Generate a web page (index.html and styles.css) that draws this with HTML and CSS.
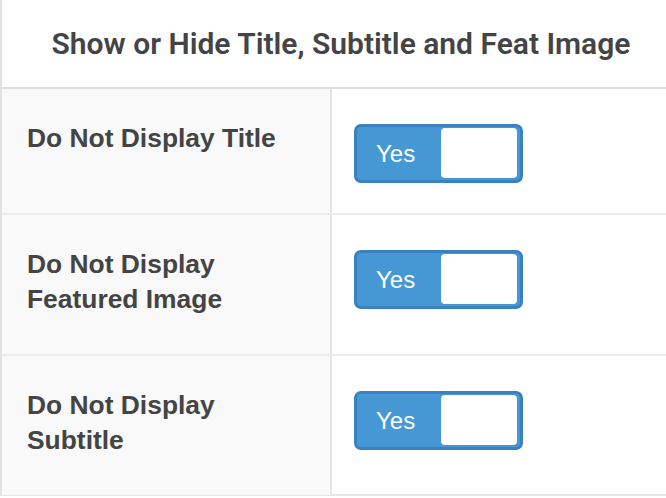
FILE: index.html
```html
<!DOCTYPE html>
<html lang="en">
<head>
    <meta charset="utf-8">
    <title>Show or Hide Title</title>
    <link rel="stylesheet" href="styles.css">
</head>
<body>
    <div class="panel">
        <div class="panel-head">Show or Hide Title, Subtitle and Feat Image</div>
        <div class="row">
            <div class="label">Do Not Display Title</div>
            <div class="value">
                <div class="toggle"><span class="toggle-text">Yes</span><span class="knob"></span></div>
            </div>
        </div>
        <div class="row">
            <div class="label">Do Not Display<br>Featured Image</div>
            <div class="value">
                <div class="toggle"><span class="toggle-text">Yes</span><span class="knob"></span></div>
            </div>
        </div>
        <div class="row">
            <div class="label">Do Not Display<br>Subtitle</div>
            <div class="value">
                <div class="toggle"><span class="toggle-text">Yes</span><span class="knob"></span></div>
            </div>
        </div>
    </div>
</body>
</html>
```

FILE: styles.css
```css
body{
    margin: 0;
    padding: 0;
    background: #fff;
    font-family: Roboto, "Liberation Sans", sans-serif;
    color: #444;
}
.panel{
    border-left: 2px solid #e2e2e2;
    border-bottom: 2px solid #e6e6ea;
    height: 496px;
    box-sizing: border-box;
}
.panel-head{
    height: 87px;
    border-bottom: 2px solid #dedede;
    text-align: center;
    font-size: 30px;
    font-weight: 600;
    line-height: 87px;
    padding-left: 14px;
    white-space: nowrap;
}
.row{
    display: grid;
    grid-template-columns: 330px 1fr;
    border-bottom: 2px solid #ebebf0;
}
.row:last-child{
    border-bottom: none;
}
.label{
    background: #f9f9f9;
    border-right: 2px solid #e4e4e4;
    padding: 32px 25px 37px;
    font-family: "Liberation Sans", sans-serif;
    font-size: 26.4px;
    line-height: 35px;
    font-weight: bold;
}
.value{
    padding: 35px 22px 30px;
}
.toggle{
    width: 169px;
    height: 59px;
    box-sizing: border-box;
    border: 3px solid #3981c1;
    border-radius: 7px;
    background: #4598d4;
    display: flex;
    align-items: stretch;
}
.toggle-text{
    flex: 1;
    color: #fff;
    font-family: "Liberation Sans", sans-serif;
    font-size: 24px;
    line-height: 53px;
    padding-left: 19px;
}
.knob{
    width: 76px;
    margin: 1px 3px 2px 0;
    background: #fff;
    border-radius: 4px;
}
```
